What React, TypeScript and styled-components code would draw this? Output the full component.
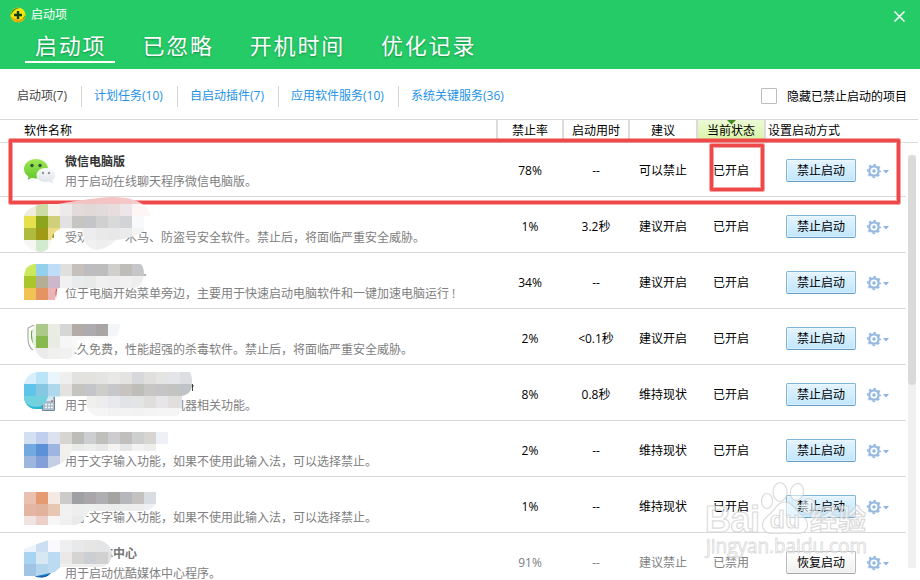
import React from "react";
import styled, { createGlobalStyle, css } from "styled-components";

const Global = createGlobalStyle`
  * { box-sizing: border-box; }
  html, body { margin: 0; padding: 0; background: #fff; overflow: hidden; }
  body { font-family: "Open Sans", "Noto Sans CJK SC", sans-serif; font-size: 12px; color: #000; }
`;

const Window = styled.div`
  position: relative;
  width: 920px;
  height: 580px;
  overflow: hidden;
  background: #fff;
`;

const Header = styled.header`
  height: 69px;
  background: #25cb67;
  color: #fff;
`;

const TitleBar = styled.div`
  display: flex;
  align-items: center;
  height: 30px;
  padding: 0 14px 0 9px;
`;

const Title = styled.span`
  flex: 1;
  margin-left: 4px;
  line-height: 30px;
`;

const CloseIcon = styled.svg`
  margin-top: 3px;
`;

const MainTabs = styled.nav`
  display: flex;
  gap: 17px;
  padding-left: 25px;
`;

const MainTab = styled.a<{ $active?: boolean }>`
  height: 33px;
  padding: 0 9px 0 10px;
  border-bottom: 2px solid ${(p) => (p.$active ? "#fff" : "transparent")};
  font-family: "Noto Sans CJK SC", sans-serif;
  font-size: 22px;
  line-height: 28px;
  letter-spacing: 1.8px;
  text-shadow: 0 1px 2px rgba(0, 70, 25, 0.45);
`;

const SubBar = styled.div`
  display: flex;
  align-items: center;
  height: 50px;
  padding: 4px 13px 0 4px;
`;

const SubTab = styled.a<{ $width: number; $active?: boolean }>`
  width: ${(p) => p.$width}px;
  height: 21px;
  padding-left: 12px;
  border-left: 1px solid ${(p) => (p.$active ? "transparent" : "#d4d4d4")};
  color: ${(p) => (p.$active ? "#444" : "#2492e6")};
  line-height: 19px;
  white-space: nowrap;
`;

const Option = styled.label`
  display: flex;
  align-items: center;
  margin-left: auto;
  gap: 10px;
`;

const Box = styled.span`
  width: 16px;
  height: 16px;
  border: 1px solid #bdbdbd;
  border-radius: 1px;
`;

const TableHead = styled.div`
  display: flex;
  width: 918px;
  height: 24px;
  border-top: 1px solid #d9d9d9;
  border-bottom: 1px solid #dcdcdc;
  line-height: 21px;
`;

const HeadName = styled.div`
  width: 496px;
  padding-left: 24px;
`;

const HeadCell = styled.div<{ $width: number; $sorted?: boolean; $left?: boolean }>`
  position: relative;
  width: ${(p) => p.$width}px;
  border-left: 2px solid #dcdcdc;
  text-align: ${(p) => (p.$left ? "left" : "center")};
  padding-left: ${(p) => (p.$left ? "2px" : "0")};
  white-space: nowrap;
  ${(p) => p.$sorted && css`background: linear-gradient(#ecfad6, #d8f3a2);`}
`;

const SortMark = styled.svg`
  position: absolute;
  top: 0;
  left: 29px;
`;

const Body = styled.div`
  display: flex;
  margin-top: -2px;
`;

const Rows = styled.div`
  width: 906px;
`;

const Row = styled.div<{ $off?: boolean }>`
  position: relative;
  display: flex;
  align-items: center;
  height: 56px;
  padding-top: 4px;
  border-bottom: 1px solid #dadada;
  color: ${(p) => (p.$off ? "#808080" : "#000")};
`;

const IconSlot = styled.div`
  width: 41px;
  height: 40px;
  margin-left: 24px;
`;

const Info = styled.div`
  width: 432px;
  white-space: pre;
  padding-top: 2px;
`;

const Name = styled.div<{ $off?: boolean }>`
  height: 20px;
  color: ${(p) => (p.$off ? "#777" : "#333")};
  font-weight: 700;
  line-height: 20px;
`;

const Desc = styled.div`
  height: 20px;
  color: #808080;
  line-height: 20px;
`;

const Cell = styled.div<{ $width: number }>`
  width: ${(p) => p.$width}px;
  padding-left: 1px;
  padding-bottom: 1px;
  text-align: center;
`;

const Action = styled.button<{ $off?: boolean }>`
  width: 70px;
  height: 23px;
  margin-left: 21px;
  padding: 0 0 1px;
  border: 1px solid ${(p) => (p.$off ? "#b9b9b9" : "#7fb6d9")};
  border-bottom-color: ${(p) => (p.$off ? "#a5a5a5" : "#659dc4")};
  border-radius: 2px;
  background: ${(p) => (p.$off ? "linear-gradient(#fff, #efefef)" : "linear-gradient(#e3f4fe, #c3e6fd)")};
  box-shadow: inset 0 0 0 1px rgba(255, 255, 255, 0.35);
  color: #000;
  font: inherit;
  line-height: 19px;
`;

const Gear = styled.svg`
  margin-left: 10px;
  margin-top: 1px;
`;

const ScrollTrack = styled.div`
  width: 8px;
  height: 413px;
  margin: 14px 0 0 2px;
  background: #f0f0f0;
`;

const ScrollThumb = styled.div`
  height: 230px;
  border-radius: 4px;
  background: #dadada;
`;

const Smudge = styled.svg`
  position: absolute;
  z-index: 2;
  left: 0;
  top: 0;
  overflow: visible;
`;

const Mark = styled.div<{ $x: number; $y: number; $w: number; $h: number }>`
  position: absolute;
  z-index: 1;
  left: ${(p) => p.$x}px;
  top: ${(p) => p.$y}px;
  width: ${(p) => p.$w}px;
  height: ${(p) => p.$h}px;
  border: 3px solid #ee4848;
  border-radius: 1px;
  box-shadow: 0 0 0 1px rgba(238, 72, 72, 0.5), inset 0 0 0 1px rgba(238, 72, 72, 0.5);
  pointer-events: none;
`;

const Watermark = styled.svg`
  position: absolute;
  z-index: 3;
  left: 700px;
  top: 475px;
  pointer-events: none;
`;

type Mosaic = { top: number; clip: string; cells: string[]; under?: React.ReactNode };

type Item = {
  name: string;
  desc: string;
  rate: string;
  time: string;
  advice: string;
  off?: boolean;
  wechat?: boolean;
  mosaic?: Mosaic;
};

const items: Item[] = [
  { name: "微信电脑版", desc: "用于启动在线聊天程序微信电脑版。", rate: "78%", time: "--", advice: "可以禁止", wechat: true },
  {
    name: " ",
    desc: "受欢　　　木马、防盗号安全软件。禁止后，将面临严重安全威胁。",
    rate: "1%",
    time: "3.2秒",
    advice: "建议开启",
    mosaic: {
      top: -5,
      clip: "M24 18Q29 9 43 7L58 7Q92 1 112 0Q137 0 147 11L151 19L145 31L148 32Q132 42 116 43Q108 51 97 53Q84 51 83 38L82 33L62 32Q51 33 51 48Q47 55 40 55Q30 54 24 46Z",
      cells: [
        "f3eee4 f6e5e2 f4d0cf f4c8c8 f4c5c5 f3c3c3 f4c3c3 f4c4c4 f5c7c7 f7cccc f9dada",
        "efeddd cddca5 f5f3eb eee9eb e3dadb dfd9d7 e1dbdc e7dddd ece5e9 fef5f5 fef5f5",
        "e5e04c 8ca51c d0d07a e2e2e2 c6c5c1 c4c5c7 d0d0d0 d9d9d9 d2d3d6 f8f9fb ffffff",
        "afbb3e a09a17 eedb86 f8f8f8 f1f1f1 ededef e9e9e9 e8e8e8 ebebeb f3f3f3 ffffff",
        "f5f7f0 d3e9d0 f4f9f2 f8f8f8 f3f3f3 f0f0f0 eeeeee f0f0f0 f3f3f3 f8f8f8 ffffff",
      ],
      under: <path d="M49 40l5-8v9z" fill="#8b9e17" />,
    },
  },
  {
    name: " ",
    desc: "位于电脑开始菜单旁边，主要用于快速启动电脑软件和一键加速电脑运行 !",
    rate: "34%",
    time: "--",
    advice: "建议开启",
    mosaic: {
      top: 11,
      clip: "M24 23Q25 12 34 11H140Q144 12 144 22Q143 34 133 35H60L56 36L55 47H24Z",
      cells: [
        "cbe95d 94d0ed bfdcf9 dfdfdf c6c0bc bdbdbf bdbdbd d0cfcd bebdba c5c6c8",
        "a9c72b b5ae97 cbb8cb f1f1f1 e9ecec e8e9e9 f0f0f0 eeeeef f1f1f1 eeeeee",
        "f0c352 e49362 ebb3b3 fafafa fafafa fafafa fafafa fafafa fafafa fafafa",
      ],
      under: <><path d="M54 35l2 10 1-10z" fill="#c82a30" /><path d="M142 22h4" stroke="#666" /></>,
    },
  },
  {
    name: " ",
    desc: "永久免费，性能超强的杀毒软件。禁止后，将面临严重安全威胁。",
    rate: "2%",
    time: "<0.1秒",
    advice: "建议开启",
    mosaic: {
      top: 15,
      clip: "M36 15H120Q120 27 112 30L77 31Q76 51 66 50H44Q33 45 32 26Q32 19 36 15Z",
      cells: [
        "edf3e8 abca89 e8ece3 d6d6d6 b2aba7 adabad a8a5a4 f2f6f9",
        "e6f0e0 88b94e e8ece2 f6f6f6 f8f8f8 fafafa fafafa fcfcfc",
        "f2f2f2 ebebeb f0f1ef f1f1f1 f4f4f4 ffffff ffffff ffffff",
      ],
      under: (
        <>
          <path d="M34 16l-6 3v10q0 9 5 12" fill="#fff" stroke="#aaa" strokeWidth="1.2" />
          <path d="M34 20l-3 2v7q1 5 3 7z" fill="#6eae3c" />
        </>
      ),
    },
  },
  {
    name: " ",
    desc: "用于　　　　　　　机器相关功能。",
    rate: "8%",
    time: "0.8秒",
    advice: "维持现状",
    mosaic: {
      top: 7,
      clip: "M24 18Q27 9 36 7H190Q193 14 192 21Q191 29 182 31L182 42Q181 51 174 51H96Q87 48 86 39L87 31L48 32Q45 42 35 42Q27 41 24 35Z",
      cells: [
        "d6effb bae4f7 e9f7fd efefef e2e2df e3e2df e4e4e2 e8e8e7 e5e3e2 d7d8dc e0dfdd e4e4e3 e3e5e8 dcdee1",
        "5fc4e9 86c8e2 afd8ec e2e2e1 c5c4bf c3c5c9 cdcdca c5c7c9 c7c3bf bdbdb9 c7c6c5 c5c5c8 c3c3c0 bfc2c7",
        "70d1df 75cfdf c2e5ea f0f0f0 eeeeee f0f0ef ededed e7e9ed e1e3e7 e3e4e4 dfdedd e6e6e8 e0dfde e0e1e3",
        "ffffff ffffff ffffff fafafa f6f6f6 f5f5f5 f5f5f5 f2f2f2 f3f3f3 f2f2f2 f4f4f4 f5f5f5 f5f5f5 f5f5f5",
      ],
      under: (
        <>
          <path d="M25 37q4 8 13 7h7V30H26z" fill="#27b9d5" />
          <path d="M42.500 30.500h12v15h-12z" fill="#a9bccb" stroke="#71899b" />
          <path d="M44 31h9v5h-9z" fill="#d5e8f0" />
          <path d="M45 39.500h2m1 0h2m1 0h2m-8 3h2m1 0h2m1 0h2" stroke="#f4f8fb" strokeWidth="1.500" />
          <path d="M51 36h2" stroke="#d33" />
          <path d="M190 21h4m-1.500-2v7" stroke="#444" fill="none" />
        </>
      ),
    },
  },
  {
    name: " ",
    desc: "用于文字输入功能，如果不使用此输入法，可以选择禁止。",
    rate: "2%",
    time: "--",
    advice: "维持现状",
    mosaic: {
      top: 11,
      clip: "M24 11H168V30H75Q70 29 70 36L62 42L50 47H24Z",
      cells: [
        "d3e0f2 c0cfee dce2ef d7d5d2 bcbdba cdced2 bfc0bb cdcdd0 c1bfbe cdcece d6d5d2 edf1f6",
        "72a9df 5b92d7 9db6df f1f0ed e9ebe9 eeeeed e8e9e9 f5f4f2 e6e7e7 f3f3f3 eeeeec ffffff",
        "9db6dd 829fd7 c4cee5 f0efed f8f8f8 ffffff ffffff ffffff ffffff ffffff ffffff ffffff",
      ],
    },
  },
  {
    name: " ",
    desc: "用于文字输入功能，如果不使用此输入法，可以选择禁止。",
    rate: "1%",
    time: "--",
    advice: "维持现状",
    mosaic: {
      top: 15,
      clip: "M24 15H156V27Q151 34 141 34L89 34Q84 47 75 48H24Z",
      cells: [
        "eac0b1 e69a72 f5e9e4 cccbc9 9fa0a4 a8a6a8 afafb1 a6a4a2 b5b7bd c4c2c0 d9dce1",
        "e5b5a4 e3b29d e7c6b2 f1f1f1 eeeeee eeefef eeeeee ebecec eceded eeeeee edf1f4",
        "f1e3e1 ebcfc8 f6f6f7 f0f0f0 e9ebea f5f5f5 ffffff ffffff ffffff ffffff ffffff",
      ],
    },
  },
  {
    name: "优酷媒体中心",
    desc: "用于启动优酷媒体中心程序。",
    rate: "91%",
    time: "--",
    advice: "建议禁止",
    off: true,
    mosaic: {
      top: 7,
      clip: "M24 16Q39 10 49 7H99Q111 10 112 21Q111 33 101 34L62 34Q58 35 55 39L37 43H24Z",
      cells: [
        "edf3fc cbdef2 fafafe efefef e7e9ea e6e6e5 e4e5e6 e6e6e6",
        "a9d4f1 d8e8f2 badbf1 e9e9e9 d5d4d3 cbcfd3 d2d1d1 e0e0e0",
        "9fc4e4 b3d5ed badbf0 efefee f0f0f0 eeeeee eeeeee eeeeee",
      ],
      under: <path d="M32 41q5 4 11 3 7-1 9-7l-5 3z" fill="#147dc6" stroke="#164f9c" strokeWidth="1" />,
    },
  },
];

const WechatIcon = () => (
  <svg width="34" height="32" viewBox="0 0 34 32">
    <defs>
      <linearGradient id="wg" x1="0" y1="0" x2="0" y2="1">
        <stop offset="0" stopColor="#a1e957" />
        <stop offset="1" stopColor="#61c527" />
      </linearGradient>
      <linearGradient id="ww" x1="0" y1="0" x2="0" y2="1">
        <stop offset="0" stopColor="#fafbfc" />
        <stop offset="1" stopColor="#dfe3e7" />
      </linearGradient>
    </defs>
    <path d="M12 8C5 8 0 12.5 0 18c0 3.200 1.800 5.800 4.500 7.400L3.700 29l4-2.200c1.400.4 2.800.6 4.300.6 7 0 12-4.300 12-9.600S19 8 12 8z" fill="url(#wg)" />
    <circle cx="8" cy="14.500" r="1.700" fill="#32503c" />
    <circle cx="16" cy="14.500" r="1.700" fill="#32503c" />
    <path d="M22 17c-5.500 0-9.500 3.200-9.500 7.200S16.500 31 22 31c1.300 0 2.400-.2 3.500-.5l3.500 1.500-.8-3c2.100-1.300 3.300-2.900 3.300-5C31.500 20.200 27.500 17 22 17z" fill="url(#ww)" />
    <circle cx="19" cy="22" r="1.200" fill="#899" />
    <circle cx="25" cy="22" r="1.200" fill="#899" />
  </svg>
);

const GearIcon = () => (
  <Gear width="24" height="16" viewBox="0 0 24 16">
    <circle cx="8" cy="8" r="6.300" fill="none" stroke="#94badf" strokeWidth="1.700" strokeDasharray="2.474 2.474" strokeDashoffset="1.237" />
    <circle cx="8" cy="8" r="4.700" fill="none" stroke="#94badf" strokeWidth="2.300" />
    <circle cx="8" cy="8" r="1.800" fill="#94badf" />
    <path d="M17 7h6l-3 3.600z" fill="#8fb5dc" />
  </Gear>
);

const MosaicCover = ({ id, data }: { id: string; data: Mosaic }) => (
  <Smudge width="200" height="56" viewBox="0 0 200 56">
    {data.under}
    <clipPath id={id}>
      <path d={data.clip} />
    </clipPath>
    <g clipPath={`url(#${id})`} shapeRendering="crispEdges">
      {data.cells.map((line, r) =>
        line.split(" ").map((c, i) => (
          <rect key={`${r}-${i}`} x={24 + i * 12} y={data.top + r * 12} width="12" height="12" fill={`#${c}`} />
        ))
      )}
    </g>
  </Smudge>
);

const AppLogo = () => (
  <svg width="18" height="16" viewBox="0 0 18 16">
    <circle cx="9" cy="8" r="7.500" fill="#f6e40d" />
    <path d="M2 8C2 3 7 0 11 1 7 1 4 4 2 8zM16 8c0 5-5 8-9 7 4 0 7-3 9-7z" fill="#258218" />
    <path d="M1.500 9c1 4 4 6 8 6 3 0 6-2 7-5-3 3-10 4-15-1z" fill="#e6a70b" />
    <path d="M9 4v8M5 8h8" stroke="#123f16" strokeWidth="2.400" />
  </svg>
);

const BaiduMark = () => (
  <Watermark width="175" height="90" viewBox="700 475 175 90">
    <g fill="#fff" fillOpacity="0.55" stroke="#cfcfcf" strokeOpacity="0.75" strokeWidth="1.200">
      <ellipse cx="767" cy="501" rx="5.500" ry="7.500" />
      <ellipse cx="780" cy="492" rx="7" ry="9.500" />
      <ellipse cx="797" cy="492" rx="6.500" ry="8.500" transform="rotate(12 797 492)" />
      <ellipse cx="808" cy="506" rx="6.500" ry="7.500" transform="rotate(25 808 506)" />
      <path d="M785 502c7 0 9 6 14 11 6 5 10 9 8 15-3 8-13 5-22 5s-19 3-22-5c-2-6 2-10 8-15 5-5 7-11 14-11z" />
      <g fontFamily="Liberation Sans, sans-serif" fontWeight="700">
        <text x="705" y="532" fontSize="36" textLength="55">Bai</text>
        <text x="770" y="528" fontSize="24" textLength="30">du</text>
        <text x="810" y="530" fontSize="28" fontFamily="Noto Sans CJK SC, sans-serif" textLength="56">经验</text>
      </g>
      <text x="706" y="553" fontSize="20" fontFamily="Open Sans, sans-serif" textLength="161" lengthAdjust="spacingAndGlyphs" strokeWidth="0.900">
        jingyan.baidu.com
      </text>
    </g>
  </Watermark>
);

export default function App() {
  return (
    <Window>
      <Global />
      <Header>
        <TitleBar>
          <AppLogo />
          <Title>启动项</Title>
          <CloseIcon width="13" height="13" viewBox="0 0 13 13">
            <path d="M1.500 1.500l10 10M11.500 1.500l-10 10" stroke="#fff" strokeWidth="1.500" />
          </CloseIcon>
        </TitleBar>
        <MainTabs>
          <MainTab $active>启动项</MainTab>
          <MainTab>已忽略</MainTab>
          <MainTab>开机时间</MainTab>
          <MainTab>优化记录</MainTab>
        </MainTabs>
      </Header>
      <SubBar>
        <SubTab $width={77} $active>启动项(7)</SubTab>
        <SubTab $width={96}>计划任务(10)</SubTab>
        <SubTab $width={101}>自启动插件(7)</SubTab>
        <SubTab $width={120}>应用软件服务(10)</SubTab>
        <SubTab $width={120}>系统关键服务(36)</SubTab>
        <Option>
          <Box />
          隐藏已禁止启动的项目
        </Option>
      </SubBar>
      <TableHead>
        <HeadName>软件名称</HeadName>
        <HeadCell $width={66}>禁止率</HeadCell>
        <HeadCell $width={66}>启动用时</HeadCell>
        <HeadCell $width={68}>建议</HeadCell>
        <HeadCell $width={68} $sorted>
          当前状态
          <SortMark width="9" height="5" viewBox="0 0 9 5">
            <path d="M0 0h9L4.500 4.500z" fill="#44881f" />
          </SortMark>
        </HeadCell>
        <HeadCell $width={154} $left>设置启动方式</HeadCell>
      </TableHead>
      <Body>
        <Rows>
          {items.map((it, i) => (
            <Row key={i} $off={it.off}>
              <IconSlot>{it.wechat && <WechatIcon />}</IconSlot>
              <Info>
                <Name $off={it.off}>{it.name}</Name>
                <Desc>{it.desc}</Desc>
              </Info>
              <Cell $width={65}>{it.rate}</Cell>
              <Cell $width={67}>{it.time}</Cell>
              <Cell $width={67}>{it.advice}</Cell>
              <Cell $width={69}>{it.off ? "已禁用" : "已开启"}</Cell>
              <Action $off={it.off}>{it.off ? "恢复启动" : "禁止启动"}</Action>
              <GearIcon />
              {it.mosaic && <MosaicCover id={`cover${i}`} data={it.mosaic} />}
            </Row>
          ))}
        </Rows>
        <ScrollTrack>
          <ScrollThumb />
        </ScrollTrack>
      </Body>
      <Mark $x={9} $y={139} $w={891} $h={65} />
      <Mark $x={710} $y={144} $w={54} $h={47} />
      <BaiduMark />
    </Window>
  );
}
